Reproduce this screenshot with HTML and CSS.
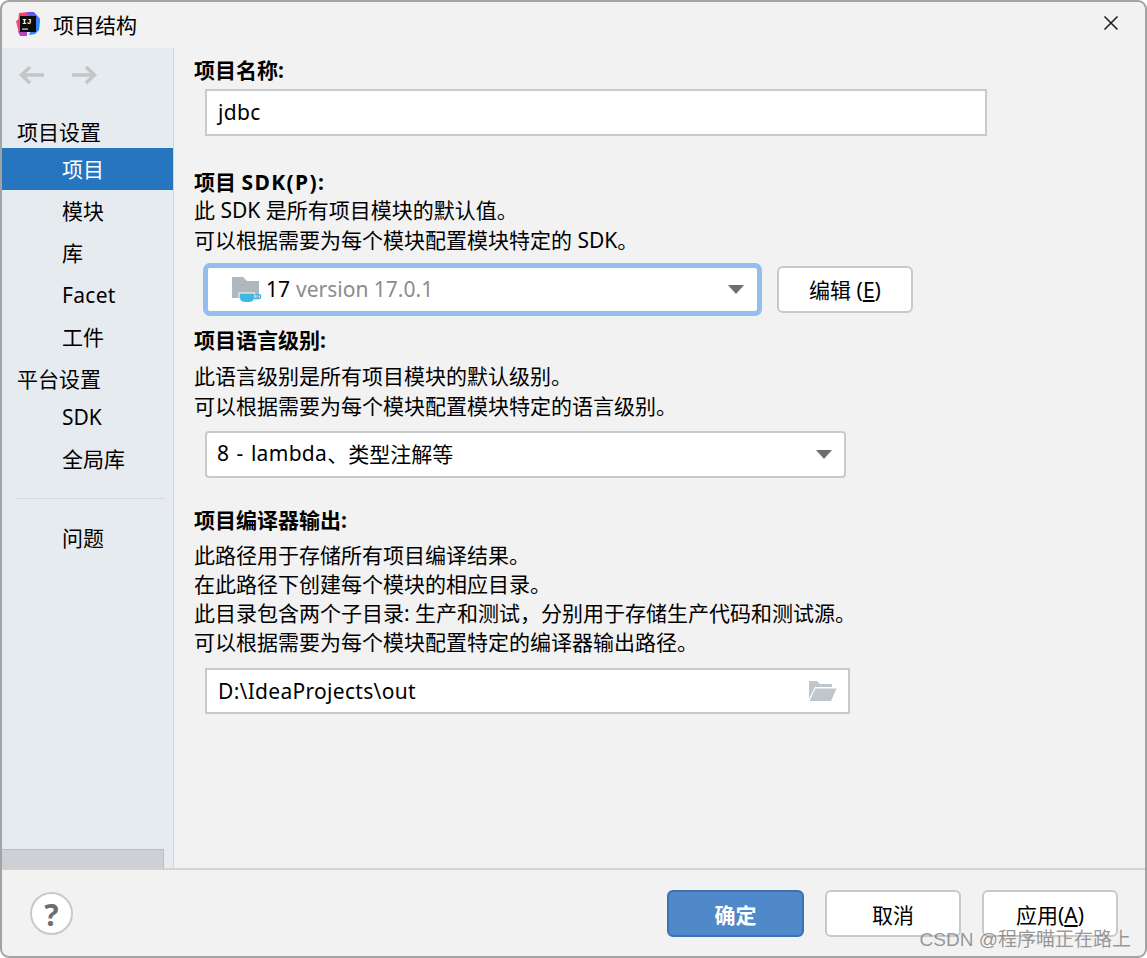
FILE: index.html
```html
<!DOCTYPE html>
<html lang="zh">
<head>
<meta charset="utf-8">
<title>项目结构</title>
<link rel="stylesheet" href="styles.css">
</head>
<body>
<div class="window">
  <header class="titlebar">
    <svg class="logo" width="26" height="26" viewBox="0 0 26 26">
      <path d="M4 2 L13 1 L15 8 L3 12 Z" fill="#fc3f6e"/>
      <path d="M1 10 L8 6 L8 21 L4 23 Z" fill="#f0487a"/>
      <path d="M12 1 L19 1 L25 8 L23 16 L16 12 Z" fill="#5b5cf0"/>
      <path d="M22 6 L25 10 L24 19 L20 23 L14 24 Z" fill="#2f86f5"/>
      <path d="M3 20 L12 19 L12 25 L5 25 Z" fill="#b345c9"/>
      <rect x="5" y="5" width="16" height="16" fill="#0c0c10"/>
      <text x="7" y="13" class="logo-text">IJ</text>
      <rect x="7" y="17.5" width="6" height="1.2" fill="#ddd"/>
    </svg>
    <span class="title">项目结构</span>
    <svg class="close" width="16" height="16" viewBox="0 0 16 16"><path d="M1.5 1.5 L14.5 14.5 M14.5 1.5 L1.5 14.5" stroke="#1a1a1a" stroke-width="1.5" fill="none"/></svg>
  </header>

  <div class="body">
    <aside class="sidebar">
      <div class="nav-arrows">
        <svg width="28" height="20" viewBox="0 0 28 20"><path d="M26 10 H4 M12 2 L3.5 10 L12 18" stroke="#c3c5c7" stroke-width="3.6" fill="none"/></svg>
        <svg width="28" height="20" viewBox="0 0 28 20"><path d="M2 10 H24 M16 2 L24.5 10 L16 18" stroke="#c3c5c7" stroke-width="3.6" fill="none"/></svg>
      </div>
      <div class="side-head first">项目设置</div>
      <div class="side-item selected">项目</div>
      <div class="side-item">模块</div>
      <div class="side-item">库</div>
      <div class="side-item latin">Facet</div>
      <div class="side-item">工件</div>
      <div class="side-head">平台设置</div>
      <div class="side-item">SDK</div>
      <div class="side-item">全局库</div>
      <div class="side-divider"></div>
      <div class="side-item">问题</div>
      <div class="side-scroll"></div>
    </aside>

    <main class="content">
      <h2 class="label">项目名称:</h2>
      <div class="field field-name latin">jdbc</div>

      <h2 class="label label-sdk">项目 <span class="bold-latin">SDK(P):</span></h2>
      <p class="desc">此 SDK 是所有项目模块的默认值。</p>
      <p class="desc">可以根据需要为每个模块配置模块特定的 SDK。</p>
      <div class="sdk-row">
        <div class="combo combo-sdk">
          <svg class="jdk" width="32" height="28" viewBox="0 0 32 28">
            <path d="M1 2 H12 L16 6 H28 V23 H1 Z" fill="#afb8bf"/>
            <path d="M8 18 H24 V21 A6 6 0 0 1 18 27.5 H14 A6 6 0 0 1 8 21 Z" fill="#40b6e0" stroke="#fff" stroke-width="1"/>
            <path d="M24 19.5 H27.5 A2 2 0 0 1 27.5 23.5 H23" fill="none" stroke="#40b6e0" stroke-width="1.5"/>
          </svg>
          <span class="ver">17</span><span class="ver-muted">version 17.0.1</span>
          <span class="caret"></span>
        </div>
        <button class="btn btn-edit">编辑 (<u>E</u>)</button>
      </div>

      <h2 class="label label-lang">项目语言级别:</h2>
      <p class="desc desc-lang">此语言级别是所有项目模块的默认级别。</p>
      <p class="desc">可以根据需要为每个模块配置模块特定的语言级别。</p>
      <div class="combo combo-lang"><span class="latin lang-text">8 - lambda</span>、类型注解等<span class="caret"></span></div>

      <h2 class="label label-out">项目编译器输出:</h2>
      <p class="desc tight desc-out">此路径用于存储所有项目编译结果。</p>
      <p class="desc tight">在此路径下创建每个模块的相应目录。</p>
      <p class="desc tight">此目录包含两个子目录: 生产和测试，分别用于存储生产代码和测试源。</p>
      <p class="desc tight">可以根据需要为每个模块配置特定的编译器输出路径。</p>
      <div class="field field-out"><span class="latin">D:\IdeaProjects\out</span>
        <svg class="open" width="29" height="22" viewBox="0 0 29 22">
          <path d="M1 1 H9 L12 4 H24 V7 H7 L1 19 Z" fill="#bfc6cc"/>
          <path d="M7.5 8.5 H28.5 L23 21 H1.5 Z" fill="#bfc6cc"/>
        </svg>
      </div>
    </main>
  </div>

  <footer class="footer">
    <button class="help">?</button>
    <div class="actions">
      <button class="btn btn-primary">确定</button>
      <button class="btn">取消</button>
      <button class="btn">应用(<u>A</u>)</button>
    </div>
  </footer>
  <div class="watermark">CSDN @程序喵正在路上</div>
</div>
</body>
</html>
```
FILE: styles.css
```css
* { box-sizing: border-box; }
html, body { margin: 0; height: 100%; background: #fff; }
body {
  font-family: "Noto Sans", "Noto Sans CJK SC", sans-serif;
  font-size: 21px;
  color: #000;
}
.latin { letter-spacing: 0.3px; }
.bold-latin { letter-spacing: 1.4px; }
.lang-text { word-spacing: 1.5px; }
.window {
  position: relative;
  width: 1147px;
  height: 958px;
  border: 2px solid #a3a3a3;
  border-radius: 9px;
  background: #f2f2f2;
  display: flex;
  flex-direction: column;
  overflow: hidden;
}
.titlebar {
  height: 46px;
  flex: none;
  display: flex;
  align-items: center;
  padding: 0 26px 0 13px;
}
.logo { flex: none; margin-bottom: 2px; }
.logo-text { font: 700 8px "Liberation Mono", monospace; fill: #fff; }
.title { margin-left: 12px; line-height: 46px; }
.close { margin-left: auto; margin-bottom: 4px; }

.body { flex: 1; display: flex; min-height: 0; }

.sidebar {
  position: relative;
  width: 172px;
  flex: none;
  background: #e6ebf0;
  border-right: 1px solid #d1d5d9;
  display: flex;
  flex-direction: column;
}
.nav-arrows {
  height: 54px;
  display: flex;
  align-items: center;
  gap: 24px;
  padding-left: 16px;
}
.side-head { height: 38px; line-height: 34px; padding: 4px 0 0 15px; }
.side-head.first { height: 46px; line-height: 60px; padding-top: 0; }
.side-item { height: 42px; line-height: 42px; padding-left: 60px; flex: none; }
.side-item.selected { background: #2675bf; color: #fff; }
.side-divider { height: 1px; background: #d5d9dd; margin: 18px 8px 18px 14px; flex: none; }
.side-scroll {
  position: absolute;
  left: 0;
  bottom: 0;
  width: 162px;
  height: 19px;
  background: #cdd1d6;
  border: 1px solid #b9bdc1;
  border-left: 0;
  border-bottom: 0;
}

.content { flex: 1; padding: 6px 0 0 20px; min-width: 0; }
.label { margin: 0; font-size: 21px; font-weight: 700; line-height: 32px; }
.desc { margin: 0; line-height: 30px; }
.desc.tight { line-height: 29px; }
.label-sdk { margin-top: 34px; line-height: 25px; }
.label-lang { margin-top: 11px; line-height: 30px; }
.desc-lang { margin-top: 6px; }
.label-out { margin-top: 26px; line-height: 32px; }
.desc.desc-out { margin-top: 4.5px; }

.field {
  background: #fff;
  border: 2px solid #c9c9c9;
  display: flex;
  align-items: center;
  padding-left: 11px;
}
.field-name { width: 782px; height: 47px; margin: 3px 0 0 11px; padding-bottom: 2px; }
.field-out { width: 645px; height: 46px; margin: 11px 0 0 11px; }
.open { margin-left: auto; margin-right: 11px; flex: none; }

.sdk-row { display: flex; align-items: flex-start; gap: 18px; height: 48px; margin: 10.5px 0 0 12px; }
.combo {
  background: #fff;
  border: 2px solid #c9c9c9;
  border-radius: 4px;
  display: flex;
  align-items: center;
  padding-left: 10px;
}
.combo-sdk {
  width: 553px;
  height: 47px;
  border-color: #94bfec;
  box-shadow: 0 0 0 3px #94bfec;
  padding-left: 23px;
}
.combo-lang { width: 641px; height: 47px; margin: 10.5px 0 0 11px; padding-bottom: 3px; }
.jdk { flex: none; margin-right: 3px; }
.ver { margin-right: 6px; }
.ver-muted { color: #8c8c8c; letter-spacing: 0; }
.caret {
  margin-left: auto;
  margin-right: 12px;
  width: 0;
  height: 0;
  border-left: 8.5px solid transparent;
  border-right: 8.5px solid transparent;
  border-top: 9px solid #6e6e6e;
  flex: none;
}
.combo-sdk .caret { margin-right: 13px; }
.combo-lang .caret { margin-top: 3px; }

.btn {
  width: 136px;
  height: 47px;
  padding: 0;
  background: #fff;
  border: 2px solid #c9c9c9;
  border-radius: 6px;
  font: inherit;
  color: #000;
}
.btn-primary {
  width: 137px;
  background: #4f89c9;
  border-color: #3c72b0;
  color: #fff;
  font-weight: 700;
}
.footer {
  height: 88px;
  flex: none;
  border-top: 2px solid #d2d2d2;
  display: flex;
  align-items: flex-start;
  padding: 20px 27px 0 28px;
}
.help {
  width: 43px;
  height: 43px;
  margin-top: 2px;
  padding: 0;
  border-radius: 50%;
  background: #fff;
  border: 2px solid #c9c9c9;
  font: 700 30px "Noto Sans", sans-serif;
  color: #6e6e6e;
}
.actions { margin-left: auto; display: flex; gap: 21px; }
.watermark {
  position: absolute;
  right: 14px;
  bottom: 2px;
  font-family: "Liberation Sans", "Noto Sans CJK SC", sans-serif;
  font-size: 19px;
  line-height: 28px;
  color: rgba(120, 120, 120, 0.75);
}
```
